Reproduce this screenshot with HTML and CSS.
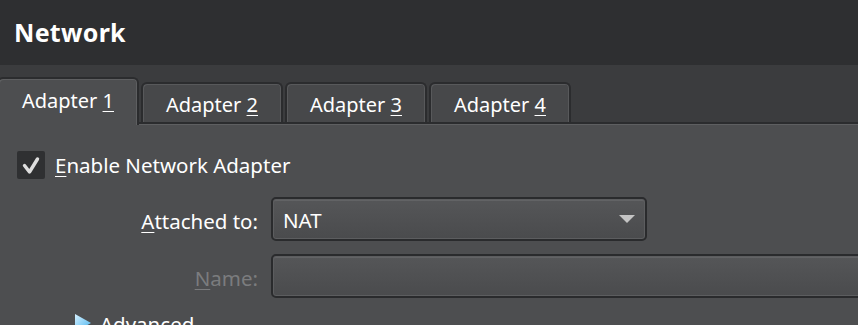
FILE: index.html
```html
<!DOCTYPE html>
<html lang="en">
<head>
    <meta charset="UTF-8">
    <title>Network</title>
    <link rel="stylesheet" href="styles.css">
</head>
<body>
    <div class="header">
        <h1 class="title">Network</h1>
    </div>
    <div class="tab-strip">
        <div class="tab active"><span>Adapter <u>1</u></span></div>
        <div class="tab"><span>Adapter <u>2</u></span></div>
        <div class="tab"><span>Adapter <u>3</u></span></div>
        <div class="tab"><span>Adapter <u>4</u></span></div>
    </div>
    <div class="pane">
        <div class="check-row">
            <span class="checkbox">
                <svg width="28" height="28" viewBox="0 0 28 28">
                    <polyline points="7.5,14.5 12.5,21 20.5,8" fill="none" stroke="#dedede" stroke-width="3.4" stroke-linecap="round" stroke-linejoin="round"/>
                </svg>
            </span>
            <span class="check-label"><u>E</u>nable Network Adapter</span>
        </div>
        <div class="form-grid">
            <label class="field-label"><u>A</u>ttached to:</label>
            <div class="combo">
                <span>NAT</span>
                <span class="arrow"></span>
            </div>
            <label class="field-label disabled"><u>N</u>ame:</label>
            <div class="combo wide"></div>
        </div>
        <div class="advanced">
            <span class="expander"></span>
            <span class="adv-label">Advanced</span>
        </div>
    </div>
</body>
</html>
```

FILE: styles.css
```css
body {
    margin: 0;
    padding: 0;
    width: 858px;
    height: 325px;
    overflow: hidden;
    background: #4d4e50;
    color: #fff;
    font-family: 'Noto Sans', sans-serif;
}
u {
    text-decoration: underline;
    text-underline-offset: 3px;
    text-decoration-thickness: 1px;
}
.header {
    height: 65px;
    background: #2e2f31;
    display: flex;
    align-items: center;
}
.title {
    margin: 0 0 1px 14px;
    font-size: 25px;
    font-weight: bold;
    letter-spacing: 0.3px;
}
.tab-strip {
    height: 57px;
    background: #3b3c3e;
    display: flex;
    align-items: flex-end;
    gap: 2px;
    position: relative;
    z-index: 1;
}
.tab {
    box-sizing: border-box;
    width: 142px;
    height: 40px;
    border: 2px solid #2b2c2e;
    border-bottom: none;
    border-radius: 6px 6px 0 0;
    background: #47484a;
    box-shadow: inset 1px 1px 0 #58595b, inset -1px 0 0 #58595b;
    display: flex;
    align-items: center;
    justify-content: center;
    font-size: 20px;
    padding-top: 3px;
}
.tab.active {
    height: 48px;
    margin-left: -3px;
    margin-bottom: -3px;
    background: #4d4e50;
    box-shadow: inset 1px 1px 0 #5e5f61, inset -1px 0 0 #5e5f61;
    padding-top: 0;
    padding-bottom: 4px;
}
.pane {
    border-top: 2px solid #2b2c2e;
    box-shadow: inset 0 1px 0 #5e5f61;
    padding: 27px 0 0 0;
    height: 300px;
}
.check-row {
    display: flex;
    align-items: center;
    margin-left: 17px;
    gap: 10px;
}
.checkbox {
    width: 28px;
    height: 28px;
    background: #2f3032;
    border-radius: 2px;
    display: block;
}
.checkbox svg {
    display: block;
}
.check-label {
    font-size: 20.5px;
}
.form-grid {
    display: grid;
    grid-template-columns: 258px 620px;
    column-gap: 13px;
    row-gap: 13px;
    margin-top: 18px;
    align-items: center;
}
.field-label {
    text-align: right;
    font-size: 20.5px;
    padding-top: 3px;
}
.field-label.disabled {
    color: #7b7c7e;
}
.combo {
    box-sizing: border-box;
    width: 376px;
    height: 44px;
    border: 2px solid #2a2b2d;
    border-radius: 5px;
    background: linear-gradient(#555658, #4a4b4d);
    box-shadow: inset 0 0 0 1px #5c5d5f, inset 0 2px 0 #626365;
    display: flex;
    align-items: center;
    justify-content: space-between;
    padding: 2px 9px 0 10px;
    font-size: 20.5px;
}
.combo.wide {
    width: 620px;
}
.arrow {
    width: 0;
    height: 0;
    border-left: 8px solid transparent;
    border-right: 8px solid transparent;
    border-top: 8px solid #c4c4c4;
    margin: -2px 1px 0 0;
}
.advanced {
    display: flex;
    align-items: flex-start;
    margin: 16px 0 0 75px;
    gap: 9px;
    font-size: 20.5px;
}
.expander {
    width: 16px;
    height: 18px;
    background: linear-gradient(135deg, #d7f1ff, #44b2ef);
    clip-path: polygon(0 0, 100% 50%, 0 100%);
}
.adv-label {
    margin-top: -4px;
}
```
